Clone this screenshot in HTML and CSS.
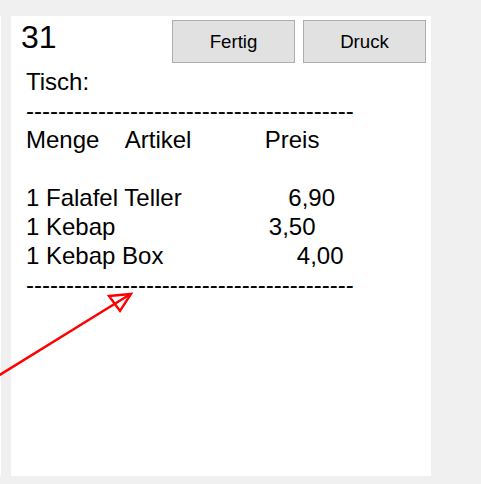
FILE: index.html
```html
<!DOCTYPE html>
<html lang="de">
<head>
    <meta charset="UTF-8">
    <meta name="viewport" content="width=device-width, initial-scale=1.0">
    <title>Bestellung 31</title>
    <link rel="stylesheet" href="styles.css">
</head>
<body>
    <div class="board">
        <div class="order order-prev"></div>
        <div class="order">
            <div class="order-head">
                <span class="order-no">31</span>
                <button class="btn" type="button">Fertig</button>
                <button class="btn" type="button">Druck</button>
            </div>
<pre class="receipt">Tisch:
-----------------------------------------
Menge    Artikel           Preis

1 Falafel Teller                6,90
1 Kebap                       3,50
1 Kebap Box                    4,00
-----------------------------------------</pre>
        </div>
    </div>

    <svg class="annotation" width="481" height="484" viewBox="0 0 481 484">
        <line x1="-2" y1="376" x2="129" y2="295" stroke="#ff0000" stroke-width="2.4"/>
        <polygon points="109,296 131,294 120,311" fill="none" stroke="#ff0000" stroke-width="2.4" stroke-linejoin="miter"/>
    </svg>
</body>
</html>
```

FILE: styles.css
```css
body {
    margin: 0;
    background-color: #f0f0f0;
    font-family: "Liberation Sans", Arial, sans-serif;
    color: #000;
}
.board {
    display: flex;
    gap: 10px;
    padding-top: 16px;
}
.order {
    width: 420px;
    height: 460px;
    background-color: #fff;
}
.order-prev {
    width: 1px;
}
.order-head {
    display: flex;
    align-items: flex-start;
    gap: 8px;
    padding: 4px 5px 0 10px;
}
.order-no {
    font-size: 32px;
    line-height: 34px;
    margin-right: auto;
}
.btn {
    width: 123px;
    height: 43px;
    padding: 0;
    font-family: "Liberation Sans", Arial, sans-serif;
    font-size: 18.67px;
    color: #000;
    background-color: #e1e1e1;
    border: 1px solid #adadad;
    border-radius: 0;
}
.receipt {
    margin: 4px 0 0;
    padding-left: 15px;
    font-family: "Liberation Sans", Arial, sans-serif;
    font-size: 24px;
    line-height: 29px;
}
.annotation {
    position: absolute;
    top: 0;
    left: 0;
    pointer-events: none;
}
```
